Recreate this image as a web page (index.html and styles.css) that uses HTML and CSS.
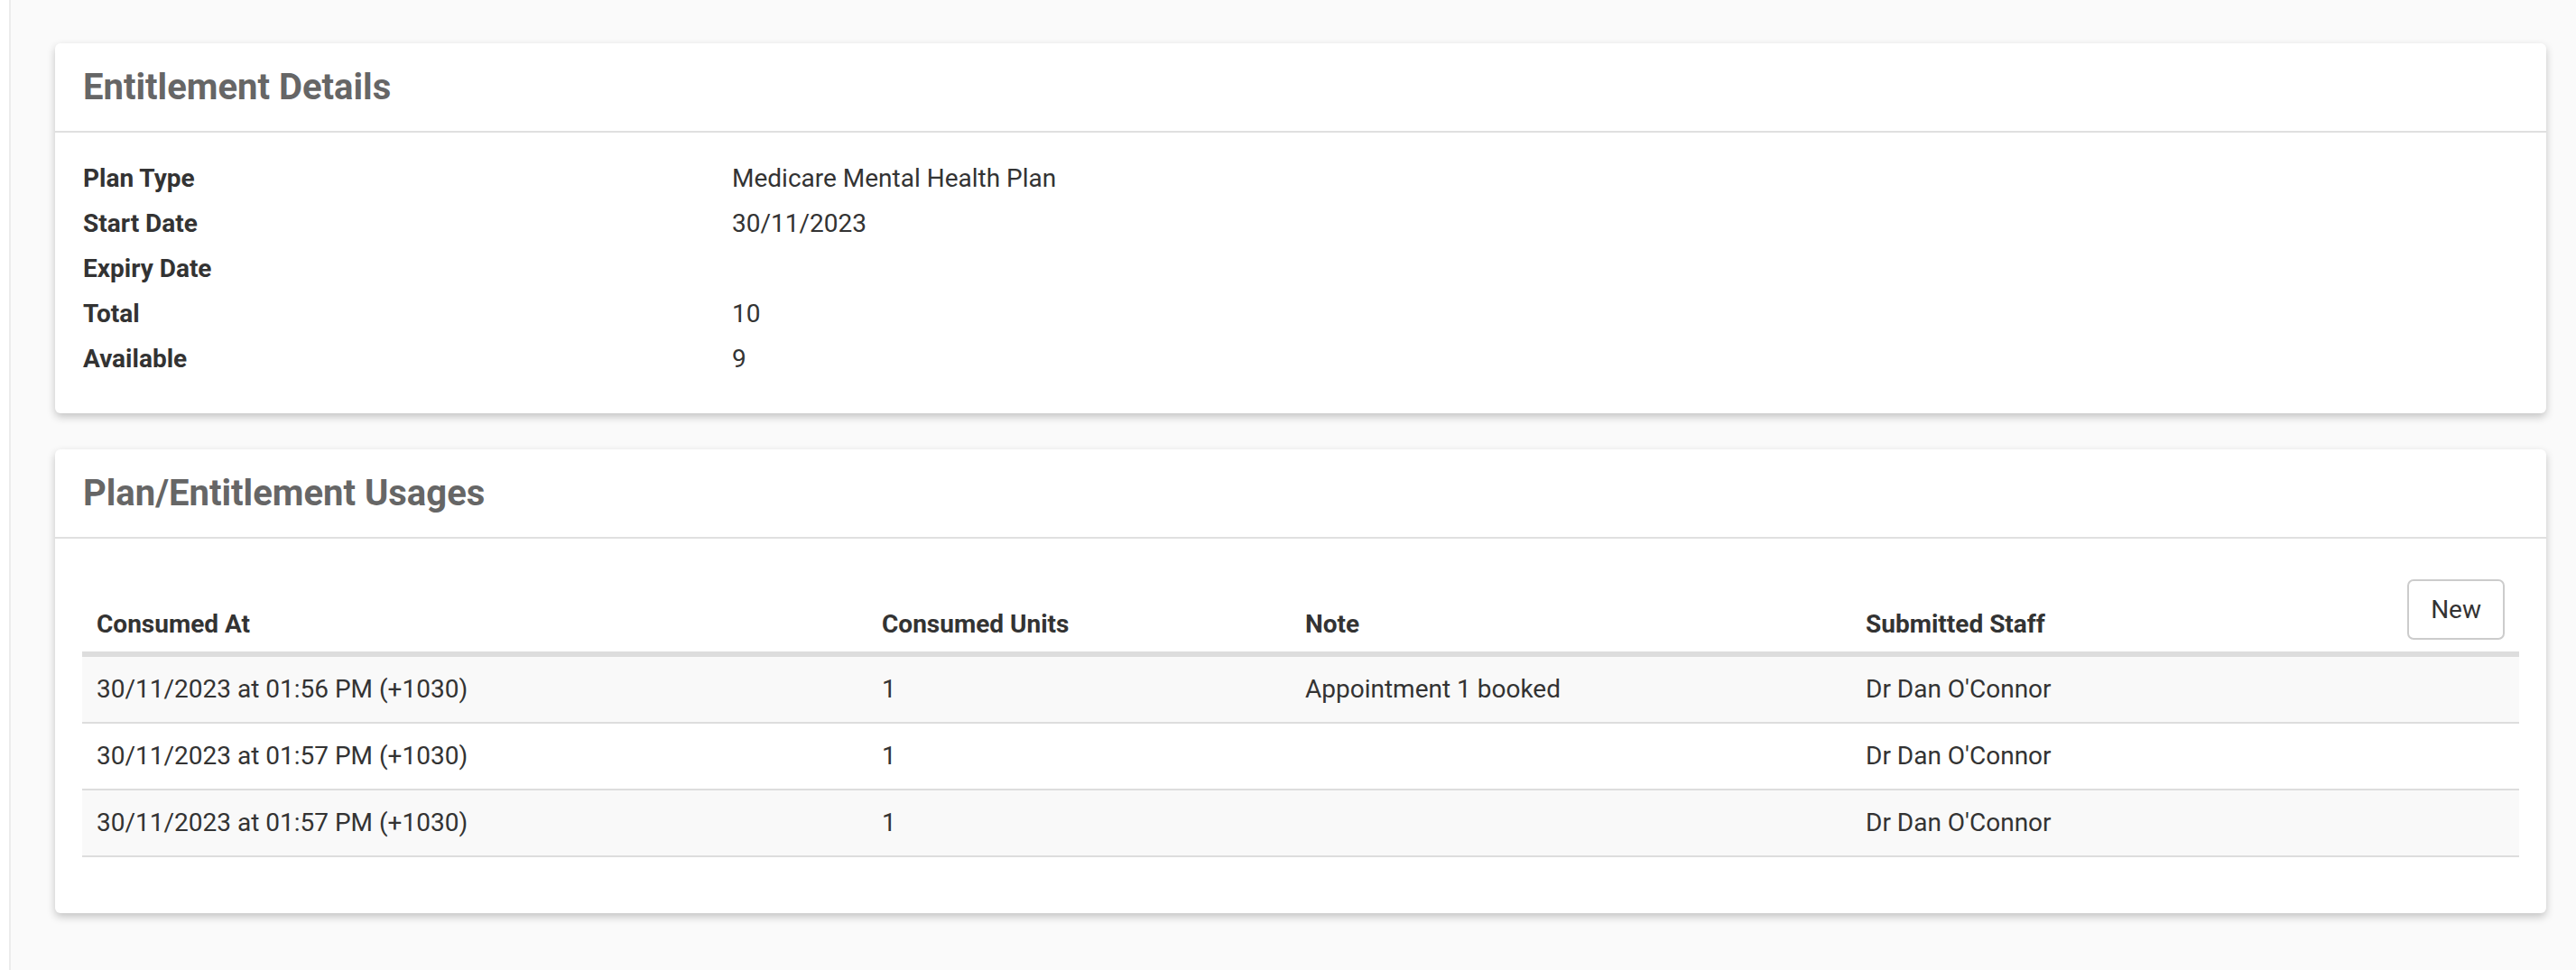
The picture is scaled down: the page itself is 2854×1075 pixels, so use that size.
FILE: index.html
```html
<!DOCTYPE html>
<html lang="en">
<head>
    <meta charset="UTF-8">
    <meta name="viewport" content="width=device-width, initial-scale=1.0">
    <title>Entitlement Details</title>
    <link rel="stylesheet" href="styles.css">
</head>
<body>
    <div class="page">
        <section class="panel">
            <div class="panel-heading">
                <h3 class="panel-title">Entitlement Details</h3>
            </div>
            <div class="panel-body">
                <dl class="details">
                    <dt>Plan Type</dt>
                    <dd>Medicare Mental Health Plan</dd>
                    <dt>Start Date</dt>
                    <dd>30/11/2023</dd>
                    <dt>Expiry Date</dt>
                    <dd></dd>
                    <dt>Total</dt>
                    <dd>10</dd>
                    <dt>Available</dt>
                    <dd>9</dd>
                </dl>
            </div>
        </section>

        <section class="panel">
            <div class="panel-heading">
                <h3 class="panel-title">Plan/Entitlement Usages</h3>
            </div>
            <div class="panel-body panel-body-table">
                <table class="usage-table">
                    <thead>
                        <tr>
                            <th class="col-at">Consumed At</th>
                            <th class="col-units">Consumed Units</th>
                            <th class="col-note">Note</th>
                            <th>
                                <div class="th-actions">
                                    <span>Submitted Staff</span>
                                    <button class="btn" type="button">New</button>
                                </div>
                            </th>
                        </tr>
                    </thead>
                    <tbody>
                        <tr>
                            <td>30/11/2023 at 01:56 PM (+1030)</td>
                            <td>1</td>
                            <td>Appointment 1 booked</td>
                            <td>Dr Dan O'Connor</td>
                        </tr>
                        <tr>
                            <td>30/11/2023 at 01:57 PM (+1030)</td>
                            <td>1</td>
                            <td></td>
                            <td>Dr Dan O'Connor</td>
                        </tr>
                        <tr>
                            <td>30/11/2023 at 01:57 PM (+1030)</td>
                            <td>1</td>
                            <td></td>
                            <td>Dr Dan O'Connor</td>
                        </tr>
                    </tbody>
                </table>
            </div>
        </section>
    </div>
</body>
</html>
```

FILE: styles.css
```css
:root {
    --texto: #333333;
    --titulo: #666666;
    --borde: #dddddd;
    --fondo: #fafafa;
    --fila: #f9f9f9;
}

body {
    margin: 0;
    background-color: #ffffff;
    font-family: Roboto, "Liberation Sans", Arial, sans-serif;
    font-size: 28px;
    color: var(--texto);
}

.page {
    margin-left: 10px;
    border-left: 2px solid #ececec;
    background-color: var(--fondo);
    min-height: 100vh;
    box-sizing: border-box;
    padding: 48px 33px 40px 49px;
    display: flex;
    flex-direction: column;
    gap: 40px;
}

.panel {
    background-color: #ffffff;
    border-radius: 6px;
    box-shadow: 0 4px 10px rgba(0, 0, 0, 0.22);
}

.panel-heading {
    height: 97px;
    padding: 0 31px;
    display: flex;
    align-items: center;
    border-bottom: 2px solid #e0e0e0;
}

.panel-title {
    margin: 0;
    font-size: 40px;
    font-weight: 700;
    color: var(--titulo);
}

.panel-body {
    padding: 26px 31px 35px;
}

.panel-body-table {
    padding: 30px 30px 30px;
}

.details {
    margin: 0;
    display: grid;
    grid-template-columns: 719px 1fr;
    line-height: 50px;
}

.details dt {
    font-weight: 700;
}

.details dd {
    margin: 0;
    min-height: 50px;
}

.usage-table {
    width: 100%;
    border-collapse: collapse;
    margin-bottom: 32px;
}

.usage-table th {
    text-align: left;
    vertical-align: bottom;
    font-weight: 700;
    line-height: 42px;
    padding: 15px 16px 9px;
    border-bottom: 6px solid var(--borde);
}

.usage-table td {
    line-height: 42px;
    padding: 15px 16px;
    border-bottom: 2px solid var(--borde);
}

.usage-table tbody tr:nth-child(odd) {
    background-color: var(--fila);
}

.col-at {
    width: 838px;
}

.col-units {
    width: 437px;
}

.col-note {
    width: 589px;
}

.th-actions {
    display: flex;
    justify-content: space-between;
    align-items: flex-end;
}

.btn {
    height: 67px;
    margin-bottom: 4px;
    padding: 0 24px;
    background-color: #ffffff;
    border: 2px solid #cccccc;
    border-radius: 7px;
    font-family: Roboto, "Liberation Sans", Arial, sans-serif;
    font-size: 28px;
    color: var(--texto);
    cursor: pointer;
}

.btn:hover {
    background-color: #f0f0f0;
}
```
